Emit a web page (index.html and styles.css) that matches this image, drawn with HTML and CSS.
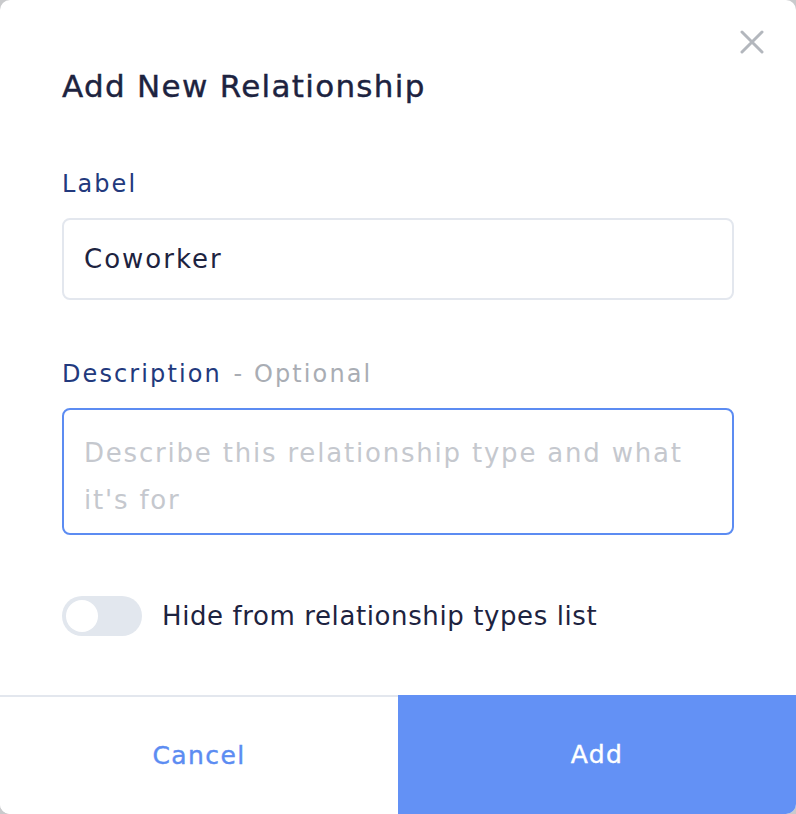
FILE: index.html
```html
<!DOCTYPE html>
<html lang="en">
<head>
    <meta charset="UTF-8">
    <title>Add New Relationship</title>
    <link rel="stylesheet" href="styles.css">
</head>
<body>
    <div class="modal">
        <button class="close" aria-label="Close">
            <svg width="24" height="24" viewBox="0 0 24 24"><path d="M2 2L22 22M22 2L2 22" stroke="#b3b7bd" stroke-width="3" stroke-linecap="round"/></svg>
        </button>
        <div class="content">
            <h1 class="title">Add New Relationship</h1>
            <div class="field">
                <label class="label">Label</label>
                <div class="input">Coworker</div>
            </div>
            <div class="field">
                <label class="label">Description <span class="optional">- Optional</span></label>
                <div class="textarea">Describe this relationship type and what it's for</div>
            </div>
            <div class="toggle-row">
                <span class="toggle"><span class="knob"></span></span>
                <span class="toggle-text">Hide from relationship types list</span>
            </div>
        </div>
        <div class="footer">
            <button class="btn cancel">Cancel</button>
            <button class="btn add">Add</button>
        </div>
    </div>
</body>
</html>
```

FILE: styles.css
```css
body {
    margin: 0;
    background: #c9cacc;
    font-family: "DejaVu Sans", sans-serif;
}
.modal {
    position: relative;
    width: 796px;
    height: 814px;
    background: #fff;
    border-radius: 10px;
    overflow: hidden;
    display: flex;
    flex-direction: column;
}
.close {
    position: absolute;
    top: 30px;
    right: 32px;
    padding: 0;
    border: 0;
    background: none;
    line-height: 0;
}
.content {
    flex: 1;
    padding: 66px 62px 0;
}
.title {
    margin: 0 0 63px;
    font-size: 31px;
    line-height: 40px;
    font-weight: 400;
    letter-spacing: 1.3px;
    color: #1d2340;
    -webkit-text-stroke: 0.4px #1d2340;
}
.field {
    margin-bottom: 59px;
}
.label {
    display: block;
    font-size: 24px;
    line-height: 30px;
    letter-spacing: 2.1px;
    color: #22397d;
    margin-bottom: 19px;
}
.optional {
    color: #a9adb4;
    margin-left: 2px;
}
.input {
    height: 82px;
    box-sizing: border-box;
    border: 2px solid #e3e7ee;
    border-radius: 8px;
    padding: 0 20px;
    display: flex;
    align-items: center;
    font-size: 26px;
    letter-spacing: 2px;
    color: #1d2340;
}
.textarea {
    height: 127px;
    box-sizing: border-box;
    border: 2px solid #5c8cf2;
    border-radius: 8px;
    padding: 20px 20px;
    font-size: 26px;
    line-height: 47px;
    letter-spacing: 1.8px;
    color: #c5c8ce;
}
.toggle-row {
    display: flex;
    align-items: center;
    gap: 20px;
    margin-top: -59px;
    padding-top: 61px;
}
.toggle {
    width: 80px;
    height: 40px;
    border-radius: 20px;
    background: #e2e7ee;
    display: flex;
    align-items: center;
    padding: 0 4px;
    box-sizing: border-box;
}
.knob {
    width: 32px;
    height: 32px;
    border-radius: 50%;
    background: #fff;
}
.toggle-text {
    font-size: 26px;
    letter-spacing: 0.6px;
    color: #1d2340;
}
.footer {
    display: flex;
    height: 117px;
    border-top: 2px solid #e3e7ee;
}
.btn {
    flex: 1;
    border: 0;
    font-family: inherit;
    font-size: 25px;
    letter-spacing: 1.4px;
    cursor: pointer;
}
.cancel {
    background: #fff;
    color: #5c8cf2;
    -webkit-text-stroke: 0.4px #5c8cf2;
}
.add {
    background: #6391f5;
    color: #fff;
    margin-top: -2px;
    -webkit-text-stroke: 0.4px #fff;
}
```
